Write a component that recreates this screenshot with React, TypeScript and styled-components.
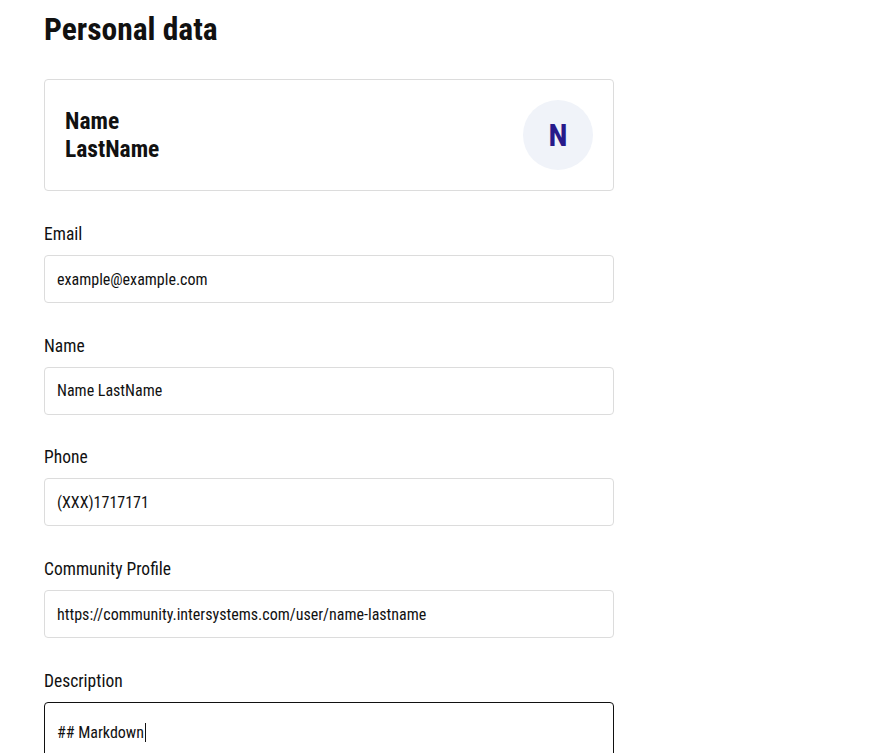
import React from "react";
import styled, { createGlobalStyle } from "styled-components";

const Global = createGlobalStyle`
  html, body { margin: 0; padding: 0; background: #fff; }
  body { font-family: "Roboto Condensed", "Roboto", sans-serif; color: #111; }
`;

const Page = styled.div`
  padding: 8px 44px 0 44px;
  width: 570px;
  display: flex;
  flex-direction: column;
`;

const Title = styled.h1`
  margin: 0;
  font-size: 31.5px;
  font-weight: 700;
  line-height: 44px;
  color: #111;
`;

const Card = styled.div`
  margin-top: 27px;
  height: 112px;
  box-sizing: border-box;
  border: 1px solid #dcdcdc;
  border-radius: 4px;
  display: flex;
  align-items: center;
  justify-content: space-between;
  padding: 0 20px;
`;

const CardName = styled.div`
  font-size: 23.5px;
  font-weight: 700;
  line-height: 28px;
  color: #111;
`;

const Avatar = styled.div`
  width: 70px;
  height: 70px;
  border-radius: 50%;
  background: #f0f3f9;
  color: #27198a;
  font-size: 31px;
  font-weight: 700;
  display: flex;
  align-items: center;
  justify-content: center;
`;

const Fields = styled.div`
  display: flex;
  flex-direction: column;
  gap: 30.7px;
  margin-top: 31px;
`;

const Field = styled.label`
  display: flex;
  flex-direction: column;
  gap: 11px;
`;

const Label = styled.span`
  font-size: 17.5px;
  line-height: 22px;
  padding-top: 1px;
  margin-bottom: -1px;
  color: #111;
`;

const Input = styled.div<{ $focused?: boolean }>`
  box-sizing: border-box;
  height: ${(p) => (p.$focused ? "70px" : "48px")};
  border: 1px solid ${(p) => (p.$focused ? "#111" : "#dcdcdc")};
  border-radius: 4px;
  padding: ${(p) => (p.$focused ? "20px 12px" : "0 12px")};
  display: flex;
  align-items: ${(p) => (p.$focused ? "flex-start" : "center")};
  font-size: 16px;
  line-height: 19px;
  color: #111;
`;

const Caret = styled.span`
  display: inline-block;
  width: 1px;
  height: 19px;
  background: #111;
  margin-left: 1px;
`;

const fields = [
  { label: "Email", value: "example@example.com" },
  { label: "Name", value: "Name LastName" },
  { label: "Phone", value: "(XXX)1717171" },
  { label: "Community Profile", value: "https://community.intersystems.com/user/name-lastname" },
];

export default function App() {
  return (
    <>
      <Global />
      <Page>
        <Title>Personal data</Title>
        <Card>
          <CardName>
            Name
            <br />
            LastName
          </CardName>
          <Avatar>N</Avatar>
        </Card>
        <Fields>
          {fields.map((f) => (
            <Field key={f.label}>
              <Label>{f.label}</Label>
              <Input>{f.value}</Input>
            </Field>
          ))}
          <Field>
            <Label>Description</Label>
            <Input $focused>
              <span>## Markdown</span>
              <Caret />
            </Input>
          </Field>
        </Fields>
      </Page>
    </>
  );
}
